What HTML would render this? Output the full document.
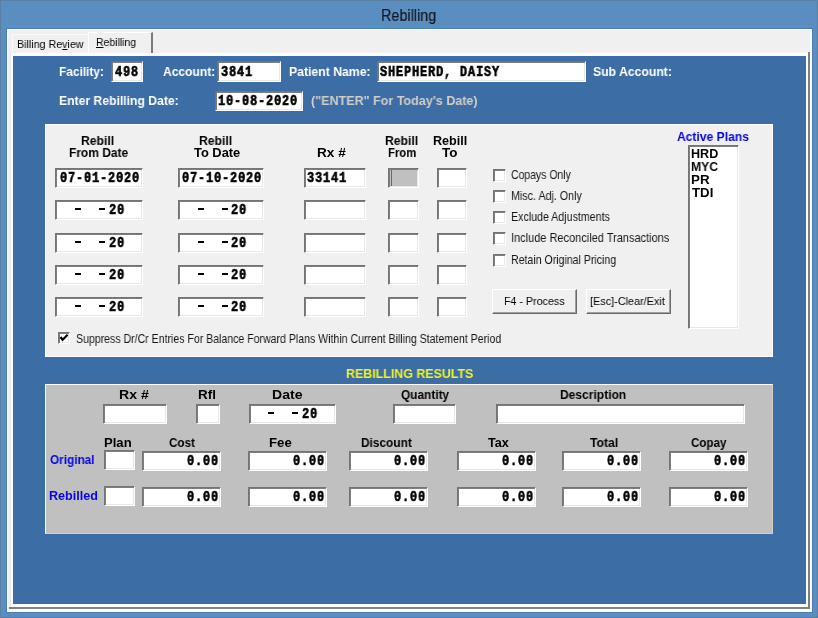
<!DOCTYPE html><html><head><meta charset="utf-8"><title>Rebilling</title><style>
*{box-sizing:border-box;margin:0;padding:0}
html,body{width:818px;height:618px;overflow:hidden}
body{position:relative;background:#5b8ec0;font-family:'Liberation Sans',sans-serif;}
div{position:absolute}
.t{white-space:pre;line-height:16px;transform-origin:0 0;will-change:transform}
.f{background:#fff;border-style:solid;border-width:1px;border-color:#747474 #fff #fff #747474;box-shadow:inset 1px 1px 0 #7e7e7e,inset -1px -1px 0 #e8e8e8}
.btn{background:#f0f0f0;border-style:solid;border-width:1px;border-color:#fff #696969 #696969 #fff;box-shadow:inset -1px -1px 0 #a0a0a0}
</style></head><body>
<div style="left:0px;top:0px;width:818px;height:618px;border:1px solid #5a7fa3"></div>
<div style="left:6px;top:28px;width:807px;height:585px;background:#4a7db3"></div>
<div style="left:7px;top:29px;width:805px;height:583px;background:#fcfcfc"></div>
<div style="left:8px;top:30px;width:804px;height:581px;background:#f0f0f0"></div>
<div style="left:12px;top:34px;width:76px;height:19px;background:#f0f0f0;border-top:1px solid #fafafa;border-left:1px solid #fafafa"></div>
<div style="left:88px;top:32px;width:65px;height:21px;background:#f0f0f0;border-top:1px solid #fff;border-left:1px solid #fff;border-right:2px solid #7a7a7a"></div>
<div style="left:10px;top:53px;width:800px;height:556px;background:#fcfcfc"></div>
<div style="left:10px;top:53px;width:1px;height:556px;background:#e6e6e6"></div>
<div style="left:808px;top:52px;width:2px;height:557px;background:#808080"></div>
<div style="left:9px;top:607px;width:801px;height:2px;background:#808080"></div>
<div style="left:7px;top:609px;width:805px;height:3px;background:#fcfcfc"></div>
<div style="left:810px;top:29px;width:2px;height:583px;background:#fcfcfc"></div>
<div style="left:13px;top:56px;width:793px;height:548px;background:#3c6ea5"></div>
<div class="f" style="left:111px;top:61px;width:32px;height:21px;"></div>
<div class="f" style="left:217px;top:61px;width:64px;height:21px;"></div>
<div class="f" style="left:377px;top:61px;width:209px;height:21px;"></div>
<div class="f" style="left:215px;top:91px;width:88px;height:20px;"></div>
<div style="left:45px;top:124px;width:728px;height:233px;background:#f0f0f0;border:1px solid #fdfdfd"></div>
<div class="f" style="left:55px;top:168px;width:88px;height:20px;"></div>
<div class="f" style="left:178px;top:168px;width:86px;height:20px;"></div>
<div class="f" style="left:304px;top:168px;width:62px;height:20px;"></div>
<div class="f" style="left:388px;top:168px;width:31px;height:20px;background:#c0c0c0"></div>
<div style="left:391px;top:170px;width:1px;height:16px;background:#696969"></div>
<div class="f" style="left:437px;top:168px;width:30px;height:20px;"></div>
<div class="f" style="left:55px;top:200px;width:88px;height:20px;"></div>
<div class="f" style="left:178px;top:200px;width:86px;height:20px;"></div>
<div class="f" style="left:304px;top:200px;width:62px;height:20px;"></div>
<div class="f" style="left:388px;top:200px;width:31px;height:20px;"></div>
<div class="f" style="left:437px;top:200px;width:30px;height:20px;"></div>
<div class="f" style="left:55px;top:233px;width:88px;height:20px;"></div>
<div class="f" style="left:178px;top:233px;width:86px;height:20px;"></div>
<div class="f" style="left:304px;top:233px;width:62px;height:20px;"></div>
<div class="f" style="left:388px;top:233px;width:31px;height:20px;"></div>
<div class="f" style="left:437px;top:233px;width:30px;height:20px;"></div>
<div class="f" style="left:55px;top:265px;width:88px;height:20px;"></div>
<div class="f" style="left:178px;top:265px;width:86px;height:20px;"></div>
<div class="f" style="left:304px;top:265px;width:62px;height:20px;"></div>
<div class="f" style="left:388px;top:265px;width:31px;height:20px;"></div>
<div class="f" style="left:437px;top:265px;width:30px;height:20px;"></div>
<div class="f" style="left:55px;top:297px;width:88px;height:20px;"></div>
<div class="f" style="left:178px;top:297px;width:86px;height:20px;"></div>
<div class="f" style="left:304px;top:297px;width:62px;height:20px;"></div>
<div class="f" style="left:388px;top:297px;width:31px;height:20px;"></div>
<div class="f" style="left:437px;top:297px;width:30px;height:20px;"></div>
<div class="f" style="left:493px;top:169px;width:13px;height:13px;"></div>
<div class="f" style="left:493px;top:190px;width:13px;height:13px;"></div>
<div class="f" style="left:493px;top:211px;width:13px;height:13px;"></div>
<div class="f" style="left:493px;top:232px;width:13px;height:13px;"></div>
<div class="f" style="left:493px;top:254px;width:13px;height:13px;"></div>
<div class="btn" style="left:492px;top:289px;width:85px;height:25px"></div>
<div class="btn" style="left:586px;top:289px;width:85px;height:25px"></div>
<div class="f" style="left:688px;top:145px;width:51px;height:184px;"></div>
<div class="f" style="left:58px;top:332px;width:12px;height:12px;"></div>
<svg style="position:absolute;left:58px;top:332px" width="12" height="12" viewBox="0 0 12 12"><path d="M2.5 5 L4.6 7.8 L9.6 2.8" fill="none" stroke="#000" stroke-width="2.2"/></svg>
<div style="left:45px;top:384px;width:728px;height:150px;background:#c0c0c0;border-style:solid;border-width:1px;border-color:#fafafa #d4d0c8 #d4d0c8 #fafafa"></div>
<div class="f" style="left:103px;top:404px;width:64px;height:20px;"></div>
<div class="f" style="left:196px;top:404px;width:24px;height:20px;"></div>
<div class="f" style="left:249px;top:404px;width:87px;height:20px;"></div>
<div class="f" style="left:393px;top:404px;width:63px;height:20px;"></div>
<div class="f" style="left:496px;top:404px;width:249px;height:20px;"></div>
<div class="f" style="left:104px;top:450px;width:31px;height:20px;"></div>
<div class="f" style="left:142px;top:451px;width:79px;height:20px;"></div>
<div class="f" style="left:248px;top:451px;width:79px;height:20px;"></div>
<div class="f" style="left:349px;top:451px;width:79px;height:20px;"></div>
<div class="f" style="left:457px;top:451px;width:79px;height:20px;"></div>
<div class="f" style="left:562px;top:451px;width:79px;height:20px;"></div>
<div class="f" style="left:669px;top:451px;width:79px;height:20px;"></div>
<div class="f" style="left:104px;top:486px;width:31px;height:20px;"></div>
<div class="f" style="left:142px;top:487px;width:79px;height:20px;"></div>
<div class="f" style="left:248px;top:487px;width:79px;height:20px;"></div>
<div class="f" style="left:349px;top:487px;width:79px;height:20px;"></div>
<div class="f" style="left:457px;top:487px;width:79px;height:20px;"></div>
<div class="f" style="left:562px;top:487px;width:79px;height:20px;"></div>
<div class="f" style="left:669px;top:487px;width:79px;height:20px;"></div>
<div style="left:75px;top:208px;width:6px;height:2px;background:#000"></div>
<div style="left:99px;top:208px;width:6px;height:2px;background:#000"></div>
<div style="left:198px;top:208px;width:6px;height:2px;background:#000"></div>
<div style="left:222px;top:208px;width:6px;height:2px;background:#000"></div>
<div style="left:75px;top:241px;width:6px;height:2px;background:#000"></div>
<div style="left:99px;top:241px;width:6px;height:2px;background:#000"></div>
<div style="left:198px;top:241px;width:6px;height:2px;background:#000"></div>
<div style="left:222px;top:241px;width:6px;height:2px;background:#000"></div>
<div style="left:75px;top:273px;width:6px;height:2px;background:#000"></div>
<div style="left:99px;top:273px;width:6px;height:2px;background:#000"></div>
<div style="left:198px;top:273px;width:6px;height:2px;background:#000"></div>
<div style="left:222px;top:273px;width:6px;height:2px;background:#000"></div>
<div style="left:75px;top:305px;width:6px;height:2px;background:#000"></div>
<div style="left:99px;top:305px;width:6px;height:2px;background:#000"></div>
<div style="left:198px;top:305px;width:6px;height:2px;background:#000"></div>
<div style="left:222px;top:305px;width:6px;height:2px;background:#000"></div>
<div style="left:268px;top:412px;width:6px;height:2px;background:#000"></div>
<div style="left:292px;top:412px;width:6px;height:2px;background:#000"></div>
<div class="t" style="left:381.10px;top:8px;font-family:'Liberation Sans';font-size:16px;-webkit-text-stroke:0.2px #141a22;color:#141a22;transform:scaleX(0.9000)">Rebilling</div>
<div class="t" style="left:17.07px;top:36px;font-family:'Liberation Sans';font-size:11.5px;color:#000;transform:scaleX(0.9296)">Billing Re<u>v</u>iew</div>
<div class="t" style="left:96.00px;top:34px;font-family:'Liberation Sans';font-size:11.5px;color:#000;transform:scaleX(0.9091)"><u>R</u>ebilling</div>
<div class="t" style="left:59.09px;top:64px;font-family:'Liberation Sans';font-weight:bold;font-size:13px;color:#fff;transform:scaleX(0.9149)">Facility:</div>
<div class="t" style="left:163.00px;top:64px;font-family:'Liberation Sans';font-weight:bold;font-size:13px;color:#fff;transform:scaleX(0.9273)">Account:</div>
<div class="t" style="left:289.06px;top:64px;font-family:'Liberation Sans';font-weight:bold;font-size:13px;color:#fff;transform:scaleX(0.9412)">Patient Name:</div>
<div class="t" style="left:593.06px;top:64px;font-family:'Liberation Sans';font-weight:bold;font-size:13px;color:#fff;transform:scaleX(0.9390)">Sub Account:</div>
<div class="t" style="left:59.06px;top:93px;font-family:'Liberation Sans';font-weight:bold;font-size:13px;color:#fff;transform:scaleX(0.9365)">Enter Rebilling Date:</div>
<div class="t" style="left:311.04px;top:93px;font-family:'Liberation Sans';font-weight:bold;font-size:13px;color:#fff;color:#d2cec6;transform:scaleX(0.9649)">("ENTER" For Today's Date)</div>
<div class="t" style="left:81.03px;top:133px;font-family:'Liberation Sans';font-weight:bold;font-size:12.6px;color:#000;transform:scaleX(0.9697)">Rebill</div>
<div class="t" style="left:69.05px;top:145px;font-family:'Liberation Sans';font-weight:bold;font-size:12.6px;color:#000;transform:scaleX(0.9508)">From Date</div>
<div class="t" style="left:199.03px;top:133px;font-family:'Liberation Sans';font-weight:bold;font-size:12.6px;color:#000;transform:scaleX(0.9697)">Rebill</div>
<div class="t" style="left:194.00px;top:145px;font-family:'Liberation Sans';font-weight:bold;font-size:12.6px;color:#000;transform:scaleX(1.0222)">To Date</div>
<div class="t" style="left:316.92px;top:145px;font-family:'Liberation Sans';font-weight:bold;font-size:12.6px;color:#000;transform:scaleX(1.0800)">Rx #</div>
<div class="t" style="left:385.03px;top:133px;font-family:'Liberation Sans';font-weight:bold;font-size:12.6px;color:#000;transform:scaleX(0.9697)">Rebill</div>
<div class="t" style="left:388.10px;top:145px;font-family:'Liberation Sans';font-weight:bold;font-size:12.6px;color:#000;transform:scaleX(0.9000)">From</div>
<div class="t" style="left:433.00px;top:133px;font-family:'Liberation Sans';font-weight:bold;font-size:12.6px;color:#000;transform:scaleX(1.0000)">Rebill</div>
<div class="t" style="left:442.00px;top:145px;font-family:'Liberation Sans';font-weight:bold;font-size:12.6px;color:#000;transform:scaleX(1.0714)">To</div>
<div class="t" style="left:511.16px;top:167px;font-family:'Liberation Sans';font-size:12.4px;color:#161616;transform:scaleX(0.8429)">Copays Only</div>
<div class="t" style="left:511.14px;top:188px;font-family:'Liberation Sans';font-size:12.4px;color:#161616;transform:scaleX(0.8642)">Misc. Adj. Only</div>
<div class="t" style="left:511.14px;top:209px;font-family:'Liberation Sans';font-size:12.4px;color:#161616;transform:scaleX(0.8596)">Exclude Adjustments</div>
<div class="t" style="left:511.11px;top:230px;font-family:'Liberation Sans';font-size:12.4px;color:#161616;transform:scaleX(0.8870)">Include Reconciled Transactions</div>
<div class="t" style="left:511.15px;top:252px;font-family:'Liberation Sans';font-size:12.4px;color:#161616;transform:scaleX(0.8525)">Retain Original Pricing</div>
<div class="t" style="left:504.08px;top:293px;font-family:'Liberation Sans';font-size:11.6px;color:#000;transform:scaleX(0.9219)">F4 - Process</div>
<div class="t" style="left:590.06px;top:293px;font-family:'Liberation Sans';font-size:11.6px;color:#000;transform:scaleX(0.9367)">[Esc]-Clear/Exit</div>
<div class="t" style="left:677.00px;top:129px;font-family:'Liberation Sans';font-weight:bold;font-size:12.6px;color:#000;color:#0606e6;transform:scaleX(0.9600)">Active Plans</div>
<div class="t" style="left:691.00px;top:146px;font-family:'Liberation Sans';font-weight:bold;font-size:12.6px;color:#000;transform:scaleX(1.0000)">HRD</div>
<div class="t" style="left:691.04px;top:159px;font-family:'Liberation Sans';font-weight:bold;font-size:12.6px;color:#000;transform:scaleX(0.9630)">MYC</div>
<div class="t" style="left:690.94px;top:172px;font-family:'Liberation Sans';font-weight:bold;font-size:12.6px;color:#000;transform:scaleX(1.0625)">PR</div>
<div class="t" style="left:692.00px;top:185px;font-family:'Liberation Sans';font-weight:bold;font-size:12.6px;color:#000;transform:scaleX(1.0500)">TDI</div>
<div class="t" style="left:76.16px;top:331px;font-family:'Liberation Sans';font-size:12.6px;color:#161616;transform:scaleX(0.8379)">Suppress Dr/Cr Entries For Balance Forward Plans Within Current Billing Statement Period</div>
<div class="t" style="left:346.05px;top:366px;font-family:'Liberation Sans';font-weight:bold;font-size:13px;color:#fff;color:#f2f226;transform:scaleX(0.9545)">REBILLING RESULTS</div>
<div class="t" style="left:118.88px;top:387px;font-family:'Liberation Sans';font-weight:bold;font-size:12.6px;color:#000;transform:scaleX(1.1200)">Rx #</div>
<div class="t" style="left:197.93px;top:387px;font-family:'Liberation Sans';font-weight:bold;font-size:12.6px;color:#000;transform:scaleX(1.0667)">Rfl</div>
<div class="t" style="left:271.88px;top:387px;font-family:'Liberation Sans';font-weight:bold;font-size:12.6px;color:#000;transform:scaleX(1.1154)">Date</div>
<div class="t" style="left:401.00px;top:387px;font-family:'Liberation Sans';font-weight:bold;font-size:12.6px;color:#000;transform:scaleX(0.9412)">Quantity</div>
<div class="t" style="left:560.04px;top:387px;font-family:'Liberation Sans';font-weight:bold;font-size:12.6px;color:#000;transform:scaleX(0.9559)">Description</div>
<div class="t" style="left:103.96px;top:435px;font-family:'Liberation Sans';font-weight:bold;font-size:12.6px;color:#000;transform:scaleX(1.0400)">Plan</div>
<div class="t" style="left:169.00px;top:435px;font-family:'Liberation Sans';font-weight:bold;font-size:12.6px;color:#000;transform:scaleX(0.9286)">Cost</div>
<div class="t" style="left:268.95px;top:435px;font-family:'Liberation Sans';font-weight:bold;font-size:12.6px;color:#000;transform:scaleX(1.0500)">Fee</div>
<div class="t" style="left:361.06px;top:435px;font-family:'Liberation Sans';font-weight:bold;font-size:12.6px;color:#000;transform:scaleX(0.9434)">Discount</div>
<div class="t" style="left:488.00px;top:435px;font-family:'Liberation Sans';font-weight:bold;font-size:12.6px;color:#000;transform:scaleX(1.0000)">Tax</div>
<div class="t" style="left:590.00px;top:435px;font-family:'Liberation Sans';font-weight:bold;font-size:12.6px;color:#000;transform:scaleX(0.9655)">Total</div>
<div class="t" style="left:691.00px;top:435px;font-family:'Liberation Sans';font-weight:bold;font-size:12.6px;color:#000;transform:scaleX(0.9211)">Copay</div>
<div class="t" style="left:50.00px;top:452px;font-family:'Liberation Sans';font-weight:bold;font-size:12.6px;color:#000;color:#0606e6;transform:scaleX(0.9362)">Original</div>
<div class="t" style="left:49.00px;top:488px;font-family:'Liberation Sans';font-weight:bold;font-size:12.6px;color:#000;color:#0606e6;transform:scaleX(1.0000)">Rebilled</div>
<div class="t" style="left:115.00px;top:64px;font-family:'Liberation Mono';font-weight:bold;font-size:14px;letter-spacing:1.01px;-webkit-text-stroke:0.6px #000;color:#000;transform:scaleX(0.8500)">498</div>
<div class="t" style="left:221.00px;top:64px;font-family:'Liberation Mono';font-weight:bold;font-size:14px;letter-spacing:1.01px;-webkit-text-stroke:0.6px #000;color:#000;transform:scaleX(0.8500)">3841</div>
<div class="t" style="left:380.00px;top:64px;font-family:'Liberation Mono';font-weight:bold;font-size:14px;letter-spacing:1.01px;-webkit-text-stroke:0.6px #000;color:#000;transform:scaleX(0.8500)">SHEPHERD, DAISY</div>
<div class="t" style="left:218.15px;top:93px;font-family:'Liberation Mono';font-weight:bold;font-size:14px;letter-spacing:1.01px;-webkit-text-stroke:0.6px #000;color:#000;transform:scaleX(0.8500)">10-08-2020</div>
<div class="t" style="left:60.00px;top:170px;font-family:'Liberation Mono';font-weight:bold;font-size:14px;letter-spacing:1.01px;-webkit-text-stroke:0.6px #000;color:#000;transform:scaleX(0.8500)">07-01-2020</div>
<div class="t" style="left:182.00px;top:170px;font-family:'Liberation Mono';font-weight:bold;font-size:14px;letter-spacing:1.01px;-webkit-text-stroke:0.6px #000;color:#000;transform:scaleX(0.8500)">07-10-2020</div>
<div class="t" style="left:307.00px;top:170px;font-family:'Liberation Mono';font-weight:bold;font-size:14px;letter-spacing:1.01px;-webkit-text-stroke:0.6px #000;color:#000;transform:scaleX(0.8500)">33141</div>
<div class="t" style="left:108.55px;top:202px;font-family:'Liberation Mono';font-weight:bold;font-size:14px;letter-spacing:1.01px;-webkit-text-stroke:0.6px #000;color:#000;transform:scaleX(0.8500)">20</div>
<div class="t" style="left:230.55px;top:202px;font-family:'Liberation Mono';font-weight:bold;font-size:14px;letter-spacing:1.01px;-webkit-text-stroke:0.6px #000;color:#000;transform:scaleX(0.8500)">20</div>
<div class="t" style="left:108.55px;top:235px;font-family:'Liberation Mono';font-weight:bold;font-size:14px;letter-spacing:1.01px;-webkit-text-stroke:0.6px #000;color:#000;transform:scaleX(0.8500)">20</div>
<div class="t" style="left:230.55px;top:235px;font-family:'Liberation Mono';font-weight:bold;font-size:14px;letter-spacing:1.01px;-webkit-text-stroke:0.6px #000;color:#000;transform:scaleX(0.8500)">20</div>
<div class="t" style="left:108.55px;top:267px;font-family:'Liberation Mono';font-weight:bold;font-size:14px;letter-spacing:1.01px;-webkit-text-stroke:0.6px #000;color:#000;transform:scaleX(0.8500)">20</div>
<div class="t" style="left:230.55px;top:267px;font-family:'Liberation Mono';font-weight:bold;font-size:14px;letter-spacing:1.01px;-webkit-text-stroke:0.6px #000;color:#000;transform:scaleX(0.8500)">20</div>
<div class="t" style="left:108.55px;top:299px;font-family:'Liberation Mono';font-weight:bold;font-size:14px;letter-spacing:1.01px;-webkit-text-stroke:0.6px #000;color:#000;transform:scaleX(0.8500)">20</div>
<div class="t" style="left:230.55px;top:299px;font-family:'Liberation Mono';font-weight:bold;font-size:14px;letter-spacing:1.01px;-webkit-text-stroke:0.6px #000;color:#000;transform:scaleX(0.8500)">20</div>
<div class="t" style="left:301.55px;top:406px;font-family:'Liberation Mono';font-weight:bold;font-size:14px;letter-spacing:1.01px;-webkit-text-stroke:0.6px #000;color:#000;transform:scaleX(0.8500)">20</div>
<div class="t" style="left:187.25px;top:453px;font-family:'Liberation Mono';font-weight:bold;font-size:14px;letter-spacing:1.01px;-webkit-text-stroke:0.6px #000;color:#000;transform:scaleX(0.8500)">0.00</div>
<div class="t" style="left:293.25px;top:453px;font-family:'Liberation Mono';font-weight:bold;font-size:14px;letter-spacing:1.01px;-webkit-text-stroke:0.6px #000;color:#000;transform:scaleX(0.8500)">0.00</div>
<div class="t" style="left:394.25px;top:453px;font-family:'Liberation Mono';font-weight:bold;font-size:14px;letter-spacing:1.01px;-webkit-text-stroke:0.6px #000;color:#000;transform:scaleX(0.8500)">0.00</div>
<div class="t" style="left:502.25px;top:453px;font-family:'Liberation Mono';font-weight:bold;font-size:14px;letter-spacing:1.01px;-webkit-text-stroke:0.6px #000;color:#000;transform:scaleX(0.8500)">0.00</div>
<div class="t" style="left:607.25px;top:453px;font-family:'Liberation Mono';font-weight:bold;font-size:14px;letter-spacing:1.01px;-webkit-text-stroke:0.6px #000;color:#000;transform:scaleX(0.8500)">0.00</div>
<div class="t" style="left:714.25px;top:453px;font-family:'Liberation Mono';font-weight:bold;font-size:14px;letter-spacing:1.01px;-webkit-text-stroke:0.6px #000;color:#000;transform:scaleX(0.8500)">0.00</div>
<div class="t" style="left:187.25px;top:489px;font-family:'Liberation Mono';font-weight:bold;font-size:14px;letter-spacing:1.01px;-webkit-text-stroke:0.6px #000;color:#000;transform:scaleX(0.8500)">0.00</div>
<div class="t" style="left:293.25px;top:489px;font-family:'Liberation Mono';font-weight:bold;font-size:14px;letter-spacing:1.01px;-webkit-text-stroke:0.6px #000;color:#000;transform:scaleX(0.8500)">0.00</div>
<div class="t" style="left:394.25px;top:489px;font-family:'Liberation Mono';font-weight:bold;font-size:14px;letter-spacing:1.01px;-webkit-text-stroke:0.6px #000;color:#000;transform:scaleX(0.8500)">0.00</div>
<div class="t" style="left:502.25px;top:489px;font-family:'Liberation Mono';font-weight:bold;font-size:14px;letter-spacing:1.01px;-webkit-text-stroke:0.6px #000;color:#000;transform:scaleX(0.8500)">0.00</div>
<div class="t" style="left:607.25px;top:489px;font-family:'Liberation Mono';font-weight:bold;font-size:14px;letter-spacing:1.01px;-webkit-text-stroke:0.6px #000;color:#000;transform:scaleX(0.8500)">0.00</div>
<div class="t" style="left:714.25px;top:489px;font-family:'Liberation Mono';font-weight:bold;font-size:14px;letter-spacing:1.01px;-webkit-text-stroke:0.6px #000;color:#000;transform:scaleX(0.8500)">0.00</div>
</body></html>
